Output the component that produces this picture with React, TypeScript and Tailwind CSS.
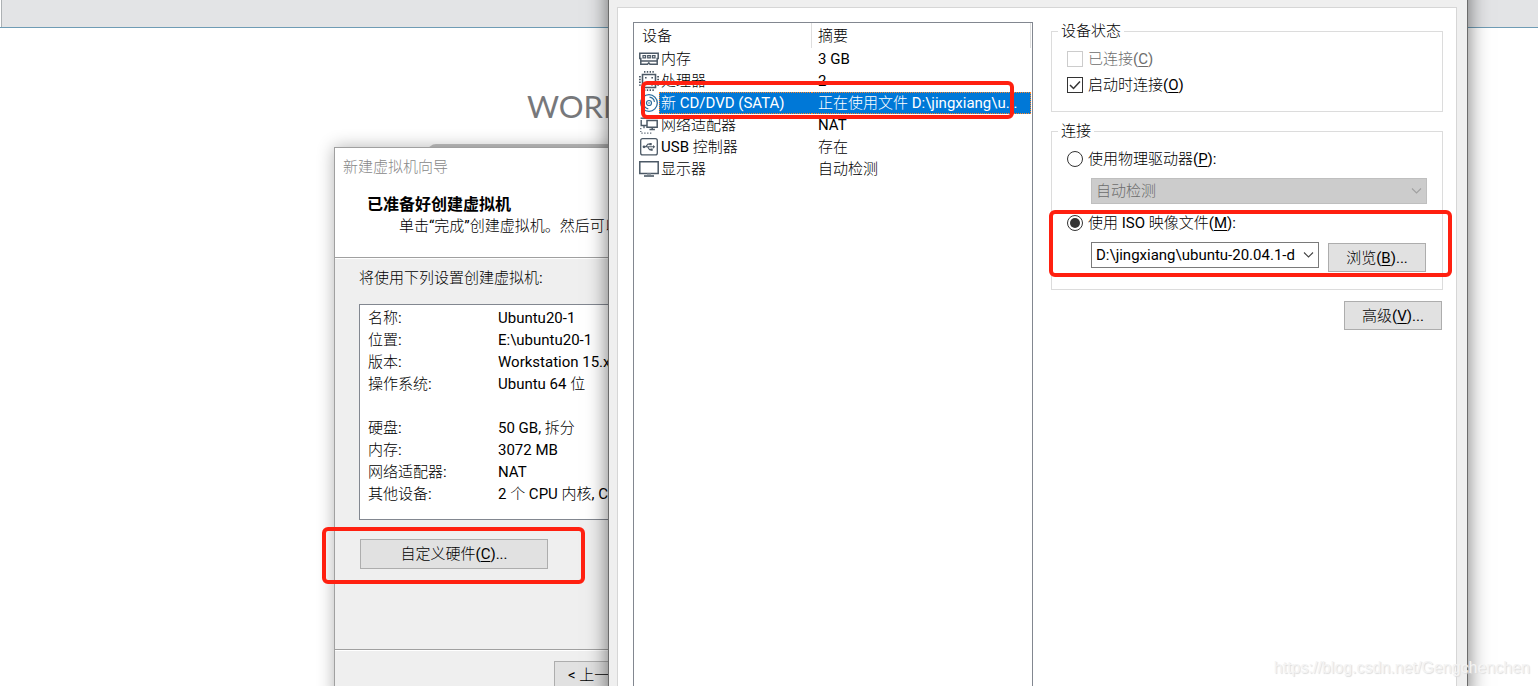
import type { ReactNode } from 'react';

const SLATE = '#4c5966';

function MemoryIcon() {
  return (
    <svg width="20" height="20" viewBox="0 0 20 20" fill="none" stroke={SLATE} strokeWidth="1.5">
      <path d="M.8 4.3h18.4v5.2h-1v5.7H11l-1.2-1.4-1.3 1.4H1.8V9.5h-1z" />
      <path d="M1.5 12h17" />
      <path d="M4 6.6h2.6v2.2H4zM8.7 6.6h2.6v2.2H8.7zM13.4 6.6H16v2.2h-2.6z" strokeWidth="1.2" />
    </svg>
  );
}

function CpuIcon() {
  return (
    <svg width="20" height="20" viewBox="0 0 20 20" fill="none" stroke={SLATE}>
      <path d="M3.5 3.5h13v13h-13z" strokeWidth="1.6" />
      <path d="M5 .9h11M5 19.1h11" strokeWidth="1.8" strokeDasharray="1.4 1.4" />
      <path d="M.9 5v11M19.1 5v11" strokeWidth="1.8" strokeDasharray="1.4 1.4" />
      <path d="M6 6h1.6v1.6H6zM12.4 6H14v1.6h-1.6zM6 12.4h1.6V14H6z" fill={SLATE} stroke="none" />
      <path d="M14 12v2h-2" strokeWidth="1" />
    </svg>
  );
}

function DiscIcon() {
  return (
    <svg width="20" height="20" viewBox="0 0 20 20" fill="none" stroke="#2d6d9c">
      <circle cx="10" cy="10" r="8.3" strokeWidth="1.3" />
      <circle cx="10" cy="10" r="2.5" strokeWidth="1.2" />
      <circle cx="10" cy="10" r=".8" fill="#2d6d9c" stroke="none" />
      <path d="M10.5 4.2a6 6 0 0 1 5 4.6M4.5 11.2a6 6 0 0 0 4.8 4.6" strokeWidth="1.2" />
    </svg>
  );
}

function NetworkIcon() {
  return (
    <svg width="20" height="20" viewBox="0 0 20 20" fill="none" stroke={SLATE}>
      <path d="M8 5.5h10.2v6.7H8zM10.5 14.6h5.4M13.2 12.2v2.4" strokeWidth="1.5" />
      <path d="M8 10.5H2.2V5" strokeWidth="1.4" />
      <path d="M1.6 3.2H8" strokeWidth="1.4" />
      <path d="M1.8 13v5.2h11" strokeWidth="1.2" strokeDasharray="1.2 1.7" />
      <path d="M5 10.8v2.4" strokeWidth="1.3" />
    </svg>
  );
}

function UsbIcon() {
  return (
    <svg width="20" height="20" viewBox="0 0 20 20" fill="none" stroke={SLATE}>
      <rect x="1.7" y="1.7" width="16.6" height="16.2" rx="2" strokeWidth="1.3" />
      <path d="M4.5 9.8h9.5M6.5 9.8 9 7.1h2M8.5 9.8l2 2.8h2" strokeWidth="1.1" />
      <path d="M14 7.9v3.8l2.2-1.9z" fill={SLATE} stroke="none" />
      <circle cx="5" cy="9.8" r="1.4" fill={SLATE} stroke="none" />
      <path d="M10.5 6h2.2v2.2h-2.2zM11.5 11.5h2.2v2.2h-2.2z" fill={SLATE} stroke="none" />
    </svg>
  );
}

function DisplayIcon() {
  return (
    <svg width="20" height="20" viewBox="0 0 20 20" fill="none" stroke={SLATE}>
      <path d="M.8 2.8h18.4v11.6H.8z" strokeWidth="1.5" />
      <path d="M5 17h10" strokeWidth="1.6" />
      <path d="M8 15.3h4" strokeWidth="1.4" stroke="#9aa3ab" />
    </svg>
  );
}

function Key({ children }: { children: string }) {
  return <span className="underline decoration-1 underline-offset-2">{children}</span>;
}

function PushButton({ className, children }: { className: string; children: ReactNode }) {
  return (
    <button type="button" className={`border border-[#adadad] bg-[#e1e1e1] whitespace-nowrap ${className}`}>
      {children}
    </button>
  );
}

function Chevron({ className }: { className: string }) {
  return (
    <svg className={`pointer-events-none absolute right-[5px] top-2 ${className}`} width="11" height="10" viewBox="0 0 11 10" fill="none" stroke="currentColor">
      <path d="m1 2.5 4.5 4.5L10 2.5" strokeWidth="1.1" />
    </svg>
  );
}

const devices = [
  { icon: <MemoryIcon />, name: '内存', summary: '3 GB' },
  { icon: <CpuIcon />, name: '处理器', summary: '2' },
  { icon: <DiscIcon />, name: '新 CD/DVD (SATA)', summary: '正在使用文件 D:\\jingxiang\\u...', selected: true },
  { icon: <NetworkIcon />, name: '网络适配器', summary: 'NAT' },
  { icon: <UsbIcon />, name: 'USB 控制器', summary: '存在' },
  { icon: <DisplayIcon />, name: '显示器', summary: '自动检测' },
];

const settings = [
  ['名称:', 'Ubuntu20-1'],
  ['位置:', 'E:\\ubuntu20-1'],
  ['版本:', 'Workstation 15.x'],
  ['操作系统:', 'Ubuntu 64 位'],
  ['', ''],
  ['硬盘:', '50 GB, 拆分'],
  ['内存:', '3072 MB'],
  ['网络适配器:', 'NAT'],
  ['其他设备:', '2 个 CPU 内核, CD/DVD'],
];

function Wizard() {
  return (
    <section className="absolute top-[147px] -bottom-4 left-[334px] w-[520px] flex flex-col border border-[#a0a0a0] bg-[#efefef] shadow-[0_0_16px_rgba(0,0,0,0.3)]">
      <header className="h-[110px] shrink-0 border-b border-[#a0a0a0] bg-white pt-2">
        <h2 className="pl-2 text-[#888888]">新建虚拟机向导</h2>
        <h3 className="mt-[14px] pl-8 font-['Noto_Sans_CJK_SC',sans-serif] text-[16px] font-bold">已准备好创建虚拟机</h3>
        <p className="mt-px pl-16 whitespace-nowrap [text-spacing-trim:space-all]">单击“完成”创建虚拟机。然后可以安装</p>
      </header>
      <div className="h-[392px] shrink-0 border-t border-white border-b border-b-[#a0a0a0] pl-6 pt-2">
        <p>将使用下列设置创建虚拟机:</p>
        <div className="mt-[15px] border border-[#828790] bg-white pt-[2px] pb-2 pl-2 h-[216px]">
          <dl>
            {settings.map(([label, value], i) => (
              <div key={i} className="flex h-[22px]">
                <dt className="w-[130px] shrink-0">{label}</dt>
                <dd className="whitespace-nowrap">{value}</dd>
              </div>
            ))}
          </dl>
        </div>
        <PushButton className="mt-[19px] ml-px h-[30px] w-[188px]">
          自定义硬件(<Key>C</Key>)...
        </PushButton>
      </div>
      <footer className="border-t border-white pt-[10px] pl-[219px]">
        <PushButton className="h-[28px] w-[104px]">
          &lt; 上一步(<Key>B</Key>)
        </PushButton>
      </footer>
    </section>
  );
}

function DeviceTable() {
  return (
    <div className="mt-[14px] ml-[15px] w-[400px] shrink-0 border border-[#828790] bg-white pr-px">
      <table className="w-full table-fixed border-separate border-spacing-0 text-left">
        <colgroup>
          <col className="w-[25px]" />
          <col className="w-[153px]" />
          <col />
        </colgroup>
        <thead>
          <tr className="h-[25px]">
            <th colSpan={2} className="border-r border-[#dedede] pl-2 font-normal">设备</th>
            <th className="border-r border-[#dedede] pl-[6px] font-normal">摘要</th>
          </tr>
        </thead>
        <tbody>
          {devices.map((d) => (
            <tr key={d.name} className="h-[22px]">
              <td className="p-0 pl-[5px]">{d.icon}</td>
              <td
                className={
                  d.selected
                    ? 'border border-r-0 border-dotted border-[#ff8728] bg-[#0078d7] p-0 pl-px leading-5 text-white'
                    : 'p-0 pl-[2px]'
                }
              >
                {d.name}
              </td>
              <td
                className={
                  d.selected
                    ? 'border border-l-0 border-dotted border-[#ff8728] bg-[#0078d7] p-0 pl-[6px] leading-5 whitespace-nowrap text-white'
                    : 'p-0 pl-[6px]'
                }
              >
                {d.summary}
              </td>
            </tr>
          ))}
        </tbody>
      </table>
    </div>
  );
}

function Choice({ id, type, checked, disabled, children }: { id: string; type: 'checkbox' | 'radio'; checked?: boolean; disabled?: boolean; children: ReactNode }) {
  const radio = type === 'radio';
  return (
    <div className={`flex h-[22px] items-center gap-[5px] pl-[9px] ${disabled ? 'text-[#6d6d6d]' : ''}`}>
      <span className="relative flex size-4">
        <input
          id={id}
          type={type}
          name={radio ? 'source' : id}
          defaultChecked={checked}
          disabled={disabled}
          className={`peer size-4 appearance-none border bg-white ${radio ? 'rounded-full' : ''} ${disabled ? 'border-[#cccccc]' : 'border-[#333333]'}`}
        />
        <svg className="pointer-events-none absolute inset-0 hidden peer-checked:block" width="16" height="16" viewBox="0 0 16 16">
          {radio ? <circle cx="8" cy="8" r="5" fill="#333333" /> : <path d="m3 8 3.5 3.5L13 4.5" fill="none" stroke="#333333" strokeWidth="1.5" />}
        </svg>
      </span>
      <label htmlFor={id} className="whitespace-nowrap">{children}</label>
    </div>
  );
}

function HardwareDialog() {
  return (
    <section className="absolute top-[-30px] -bottom-4 left-[608px] right-[70px] flex border-x border-[#6b6b6b] bg-[#efefef] pt-[37px] pl-2 pr-[10px] shadow-[0_0_20px_rgba(0,0,0,0.55)]">
      <div className="flex flex-1 border border-[#d6d6d6] bg-white">
        <DeviceTable />
        <div className="mt-3 mr-[13px] ml-[18px] flex min-w-0 flex-1 flex-col">
          <fieldset className="border border-[#dcdcdc] px-[6px] pb-[15px]">
            <legend className="px-[3px]">设备状态</legend>
            <div className="flex flex-col gap-1 pt-[6px]">
              <Choice id="connected" type="checkbox" disabled>
                已连接(<Key>C</Key>)
              </Choice>
              <Choice id="connect-on-start" type="checkbox" checked>
                启动时连接(<Key>O</Key>)
              </Choice>
            </div>
          </fieldset>
          <fieldset className="mt-2 border border-[#dcdcdc] px-[6px] pb-[17px]">
            <legend className="px-[3px]">连接</legend>
            <div className="flex flex-col gap-2 pt-[6px]">
              <Choice id="physical" type="radio">
                使用物理驱动器(<Key>P</Key>):
              </Choice>
              <div className="relative mr-[9px] ml-[33px] flex">
                <select aria-label="使用物理驱动器" disabled className="h-[26px] w-full appearance-none border border-[#bfbfbf] bg-[#cccccc] pl-1 text-[#6d6d6d] opacity-100">
                  <option>自动检测</option>
                </select>
                <Chevron className="text-[#a0a0a0]" />
              </div>
              <Choice id="iso" type="radio" checked>
                使用 ISO 映像文件(<Key>M</Key>):
              </Choice>
              <div className="mr-[10px] ml-[33px] flex items-start gap-[9px]">
                <div className="relative flex min-w-0 flex-1">
                  <select aria-label="使用 ISO 映像文件" className="h-[26px] w-full appearance-none border border-[#7a7a7a] bg-white pr-[23px] pl-1">
                    <option>D:\jingxiang\ubuntu-20.04.1-desktop-amd64.iso</option>
                  </select>
                  <Chevron className="text-[#444444]" />
                </div>
                <PushButton className="mt-px h-[29px] w-[98px]">
                  浏览(<Key>B</Key>)...
                </PushButton>
              </div>
            </div>
          </fieldset>
          <PushButton className="mt-[11px] mr-px h-[29px] w-[98px] self-end">
            高级(<Key>V</Key>)...
          </PushButton>
        </div>
      </div>
    </section>
  );
}

export default function App() {
  return (
    <main className="relative h-screen overflow-hidden bg-white font-['Roboto','Noto_Sans_CJK_SC_Light','Noto_Sans_CJK_SC',sans-serif] text-[15px] leading-[22px] text-black">
      <div className="border-b border-[#6f9cb5] pl-px">
        <div className="h-[27px] border-l border-[#adb1b4] bg-[#e3e4e6]" />
      </div>
      <h1 className="absolute top-[86px] left-[527px] font-['Lato',sans-serif] text-[31px] leading-10 font-normal text-[#77787b]">WORKSTATION</h1>
      <div className="absolute top-[144px] left-[428px] h-4 w-[400px] rounded-tl-lg bg-[#c4c4c4]" />
      <Wizard />
      <HardwareDialog />
      <div className="pointer-events-none absolute top-[527px] left-[322px] h-[57px] w-[263px] rounded-md border-4 border-[#ff2010]" />
      <div className="pointer-events-none absolute top-[81px] left-[641px] h-[38px] w-[373px] rounded-md border-4 border-[#ff2010]" />
      <div className="pointer-events-none absolute top-[210px] left-[1049px] h-[67px] w-[403px] rounded-md border-4 border-[#ff2010]" />
      <p className="absolute right-2 bottom-[7px] font-['Liberation_Sans',sans-serif] text-[16px] text-[#f4f4f4] [text-shadow:1px_1px_1px_#dcdcdc]">
        https://blog.csdn.net/Gengchenchen
      </p>
    </main>
  );
}
